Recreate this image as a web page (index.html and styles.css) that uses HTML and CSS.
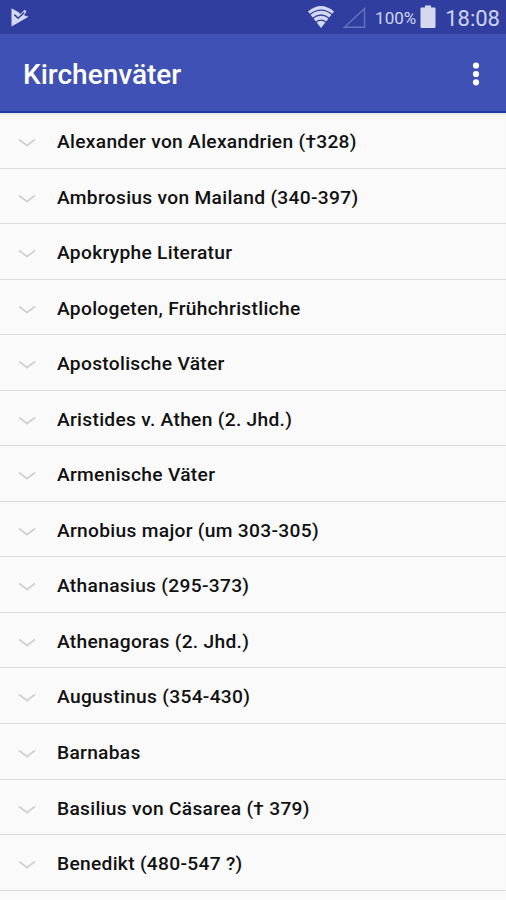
FILE: index.html
```html
<!DOCTYPE html>
<html lang="de">
<head>
    <meta charset="UTF-8">
    <meta name="viewport" content="width=device-width, initial-scale=1.0">
    <title>Kirchenväter</title>
    <link rel="stylesheet" href="styles.css">
</head>
<body>

<svg class="symbols">
    <symbol id="chevron" viewBox="0 0 18 10">
        <path d="M1 1.5L9 7.5L17 1.5" fill="none" stroke="#d2d2d2" stroke-width="1.8"/>
    </symbol>
</svg>

<div class="status-bar">
    <svg class="icon-play" width="18" height="20" viewBox="0 0 18 20">
        <path d="M.5 1.2L7.5 5.3L9.5 7L13.5 2.8L15.5 4.5L13 8.3L17.5 9.8L.5 19.5Z" fill="#d5d9f0"/>
        <path d="M3.4 7.6L7.1 11.3L13.2 5.5" fill="none" stroke="#303f9f" stroke-width="1.5"/>
    </svg>
    <svg class="icon-wifi" width="28" height="24" viewBox="0 0 28 24">
        <path d="M1 6.5Q14 -4.5 27 6.5L14 23Z" fill="#d5d9f0"/>
        <path d="M2.5 9.7Q14 .5 25.5 9.7M5.4 13.5Q14 6.5 22.6 13.5M8.6 17.4Q14 13 19.4 17.4" fill="none" stroke="#303f9f" stroke-width="1.3"/>
    </svg>
    <svg class="icon-signal" width="23" height="22" viewBox="0 0 23 22">
        <path d="M1.5 20.3H21.5V1.5Z" fill="none" stroke="#6874bd" stroke-width="1.4"/>
    </svg>
    <span class="battery-level">100%</span>
    <svg class="icon-battery" width="16" height="24" viewBox="0 0 16 24">
        <path d="M5 .5H11V2.5H14.5Q15.5 2.5 15.5 3.5V22Q15.5 23 14.5 23H1.5Q.5 23 .5 22V3.5Q.5 2.5 1.5 2.5H5Z" fill="#d5d9f0"/>
    </svg>
    <span class="clock">18:08</span>
</div>

<div class="toolbar">
    <h1>Kirchenväter</h1>
    <svg class="icon-more" width="8" height="26" viewBox="0 0 8 26">
        <g fill="#fff">
            <circle cx="4" cy="4.5" r="3.1"/>
            <circle cx="4" cy="13" r="3.1"/>
            <circle cx="4" cy="21.3" r="3.1"/>
        </g>
    </svg>
</div>

<ul class="list">
    <li><svg class="chevron"><use href="#chevron"/></svg><span>Alexander von Alexandrien (†328)</span></li>
    <li><svg class="chevron"><use href="#chevron"/></svg><span>Ambrosius von Mailand (340-397)</span></li>
    <li><svg class="chevron"><use href="#chevron"/></svg><span>Apokryphe Literatur</span></li>
    <li><svg class="chevron"><use href="#chevron"/></svg><span>Apologeten, Frühchristliche</span></li>
    <li><svg class="chevron"><use href="#chevron"/></svg><span>Apostolische Väter</span></li>
    <li><svg class="chevron"><use href="#chevron"/></svg><span>Aristides v. Athen (2. Jhd.)</span></li>
    <li><svg class="chevron"><use href="#chevron"/></svg><span>Armenische Väter</span></li>
    <li><svg class="chevron"><use href="#chevron"/></svg><span>Arnobius major (um 303-305)</span></li>
    <li><svg class="chevron"><use href="#chevron"/></svg><span>Athanasius (295-373)</span></li>
    <li><svg class="chevron"><use href="#chevron"/></svg><span>Athenagoras (2. Jhd.)</span></li>
    <li><svg class="chevron"><use href="#chevron"/></svg><span>Augustinus (354-430)</span></li>
    <li><svg class="chevron"><use href="#chevron"/></svg><span>Barnabas</span></li>
    <li><svg class="chevron"><use href="#chevron"/></svg><span>Basilius von Cäsarea († 379)</span></li>
    <li><svg class="chevron"><use href="#chevron"/></svg><span>Benedikt (480-547 ?)</span></li>
</ul>

</body>
</html>
```

FILE: styles.css
```css
body {
    margin: 0;
    height: 900px;
    overflow: hidden;
    font-family: Roboto, sans-serif;
    background-color: #fafafa;
    color: #111;
}
.symbols {
    display: none;
}
.status-bar {
    display: flex;
    box-sizing: border-box;
    height: 34px;
    padding: 0 6px 0 11px;
    background-color: #303f9f;
    color: #d0d4ee;
}
.status-bar svg {
    flex: none;
}
.icon-play {
    margin-top: 7px;
}
.icon-wifi {
    margin: 5px 8px 0 auto;
}
.icon-signal {
    margin: 7px 9px 0 0;
}
.battery-level {
    margin-right: 4px;
    font-size: 17px;
    line-height: 36px;
}
.icon-battery {
    margin: 5px 9px 0 0;
}
.clock {
    font-size: 22px;
    line-height: 37px;
}
.toolbar {
    display: flex;
    align-items: center;
    justify-content: space-between;
    box-sizing: border-box;
    height: 79px;
    padding: 2px 26px 0 23px;
    background-color: #3f51b5;
    border-bottom: 2px solid #2039a6;
}
h1 {
    margin: 2px 0 0;
    font-size: 28px;
    font-weight: 500;
    color: #fff;
}
.list {
    margin: 0;
    padding: 0;
    list-style: none;
    box-shadow: inset 0 3px 2px -1px #e8e8e6;
}
.list li {
    display: flex;
    align-items: center;
    box-sizing: border-box;
    height: 55.56px;
    padding: 2.4px 0 0 18px;
    border-bottom: 1.5px solid #dcdcdc;
    font-size: 19.2px;
    font-weight: 500;
    letter-spacing: 0.3px;
}
.chevron {
    width: 18px;
    height: 10px;
    margin: 3px 21px 0 0;
}
```
